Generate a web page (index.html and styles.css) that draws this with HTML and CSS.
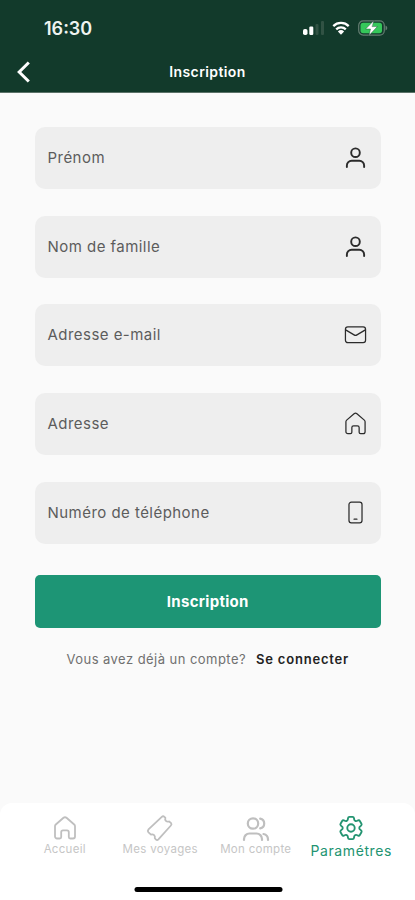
FILE: index.html
```html
<!DOCTYPE html>
<html lang="fr">
<head>
<meta charset="utf-8">
<meta name="viewport" content="width=device-width, initial-scale=1">
<title>Inscription</title>
<link rel="stylesheet" href="styles.css">
</head>
<body>
<svg class="symbols" aria-hidden="true">
  <symbol id="user" viewBox="0 0 24 24"><circle cx="12" cy="7" r="4.5"/><path d="M3 22v-1.600a5 5 0 0 1 5-5h8a5 5 0 0 1 5 5v1.600"/></symbol>
  <symbol id="mail" viewBox="0 0 24 24"><rect x="1.500" y="4" width="21" height="16.500" rx="2.500"/><path d="M1.700 7.200l8.800 5.200q1.500.9 3 0l8.800-5.200"/></symbol>
  <symbol id="home" viewBox="0 0 24 24"><path d="M2 10.200q0-1 .8-1.700l7.700-6.700q1.500-1.200 3 0l7.700 6.700q.8.700.8 1.700v10.300a2 2 0 0 1-2 2h-2.700a1.500 1.500 0 0 1-1.500-1.500v-4.800a1.800 1.800 0 0 0-1.800-1.800h-4a1.800 1.800 0 0 0-1.800 1.800v4.800a1.500 1.500 0 0 1-1.500 1.500H4a2 2 0 0 1-2-2z"/></symbol>
  <symbol id="phone" viewBox="0 0 24 24"><rect x="5.200" y="1.200" width="13.600" height="21.600" rx="2.500"/><path d="M10.500 19h3"/></symbol>
</svg>
<main class="screen">
  <header class="header">
    <div class="status">
      <span class="time">16:30</span>
      <div class="status-icons">
        <svg class="signal" viewBox="0 0 22 14"><rect class="on" x="0" y="8" width="4.500" height="6" rx="1.800"/><rect class="on" x="6.300" y="5.500" width="4" height="8.500" rx="1.200"/><rect class="off" x="12.500" y="3" width="3" height="11" rx="1"/><rect class="off" x="18" y="0" width="3" height="14" rx="1"/></svg>
        <svg class="wifi" viewBox="0 0 18 14"><path d="M1.300 5.100a11 11 0 0 1 15.400 0M4.200 8.300a6.900 6.900 0 0 1 9.600 0"/><path class="dot" d="M5.900 10.500a4.500 4.500 0 0 1 6.200 0L9 13.700z"/></svg>
        <svg class="battery" viewBox="0 0 30 16"><rect class="shell" x=".7" y=".9" width="25.600" height="14.200" rx="4.500"/><path class="cap" d="M27.500 5.500q1.800.8 1.800 2.500t-1.800 2.500z"/><rect class="charge" x="2.500" y="2.700" width="21.500" height="10.600" rx="2.700"/><path class="bolt" d="M15.700.8L7.600 9h4.900l-1.500 6.400 8.400-8.800h-5z"/></svg>
      </div>
    </div>
    <div class="titlebar">
      <svg class="back" viewBox="0 0 16 22"><path d="M12.800 1.500L3.200 11l9.600 9.500"/></svg>
      <h1 class="title">Inscription</h1>
    </div>
  </header>
  <form class="form">
    <div class="field"><span>Prénom</span><svg class="bold"><use href="#user"/></svg></div>
    <div class="field"><span>Nom de famille</span><svg class="bold"><use href="#user"/></svg></div>
    <div class="field"><span>Adresse e-mail</span><svg><use href="#mail"/></svg></div>
    <div class="field"><span>Adresse</span><svg><use href="#home"/></svg></div>
    <div class="field"><span>Numéro de téléphone</span><svg><use href="#phone"/></svg></div>
    <button class="submit" type="button">Inscription</button>
    <p class="login"><span class="question">Vous avez déjà un compte?</span><a class="link">Se connecter</a></p>
  </form>
  <nav class="tabs">
    <a class="tab"><svg viewBox="0 0 24 24"><use href="#home"/></svg><span>Accueil</span></a>
    <a class="tab"><svg class="ticket" viewBox="0 0 26 26"><path d="M1.500 14.300L14.800 1.800q1.300-1.200 2.600 0l1 1q-.7 1.900.5 3.100t3.200.6l1.800 1.400q1.200 1.300 0 2.600L11.400 24.300q-1.300 1.300-2.600 0l-1-1.100q.5-1.900-.7-3t-3.100-.6l-2.500-2.300q-1.300-1.500 0-3z"/></svg><span>Mes voyages</span></a>
    <a class="tab"><svg class="people" viewBox="0 0 28 26"><circle cx="11" cy="7.500" r="5.200"/><path d="M2 24v-1a5.500 5.500 0 0 1 5.500-5.500h7a5.500 5.500 0 0 1 5.500 5.500v1M18.200 2.600a5 5 0 0 1 0 9.800M21.500 18a5.600 5.600 0 0 1 4.500 5.500v.5"/></svg><span>Mon compte</span></a>
    <a class="tab active"><svg class="gear" viewBox="2.300 2.300 19.400 19.400"><path d="M9.594 3.940c.09-.542.56-.94 1.110-.94h2.593c.55 0 1.020.398 1.110.94l.213 1.281c.063.374.313.686.645.87.074.04.147.083.22.127.325.196.72.257 1.075.124l1.217-.456a1.125 1.125 0 0 1 1.370.49l1.296 2.247a1.125 1.125 0 0 1-.26 1.431l-1.003.827c-.293.241-.438.613-.43.992a7.723 7.723 0 0 1 0 .255c-.008.378.137.75.43.991l1.004.827c.424.35.534.955.26 1.430l-1.298 2.247a1.125 1.125 0 0 1-1.369.491l-1.217-.456c-.355-.133-.75-.072-1.076.124a6.470 6.470 0 0 1-.22.128c-.331.183-.581.495-.644.869l-.213 1.281c-.09.543-.56.94-1.110.94h-2.594c-.55 0-1.019-.398-1.110-.94l-.213-1.281c-.062-.374-.312-.686-.644-.87a6.520 6.520 0 0 1-.22-.127c-.325-.196-.72-.257-1.076-.124l-1.217.456a1.125 1.125 0 0 1-1.369-.49l-1.297-2.247a1.125 1.125 0 0 1 .26-1.431l1.004-.827c.292-.24.437-.613.43-.991a6.932 6.932 0 0 1 0-.255c.007-.38-.138-.751-.43-.992l-1.004-.827a1.125 1.125 0 0 1-.26-1.430l1.297-2.247a1.125 1.125 0 0 1 1.370-.491l1.216.456c.356.133.751.072 1.076-.124.072-.044.146-.086.22-.128.332-.183.582-.495.644-.869l.214-1.280Z"/><circle cx="12" cy="12" r="3"/></svg><span>Paramétres</span></a>
  </nav>
  <div class="indicator"></div>
</main>
</body>
</html>
```
FILE: styles.css
```css
* { box-sizing: border-box; }
body { margin: 0; font-family: Inter, "Liberation Sans", sans-serif; background: #fafafa; }
svg { display: block; fill: none; stroke: currentColor; stroke-width: 1.4; stroke-linecap: round; stroke-linejoin: round; overflow: visible; }
.symbols { display: none; }
.screen { display: flex; flex-direction: column; height: 900px; background: #fafafa; }

.header { height: 93px; background: #123a2b; border-bottom: 1px solid #5b7268; color: #fff; }
.status { display: flex; justify-content: space-between; align-items: center; height: 56px; padding: 0 27.500px 0 44px; }
.time { font-size: 18px; font-weight: 600; color: #eef3f0; }
.status-icons { display: flex; align-items: center; gap: 7.500px; }
.status-icons svg { stroke: none; }
.signal { width: 22px; height: 14px; }
.signal .on { fill: #fff; }
.signal .off { fill: #315244; }
.wifi { width: 18px; height: 14px; }
.status-icons .wifi path { stroke: #fff; stroke-width: 2.3; stroke-linecap: butt; }
.status-icons .wifi .dot { fill: #fff; stroke: none; }
.battery { width: 30px; height: 16px; }
.battery .shell { stroke: #647c71; stroke-width: 1.2; }
.battery .cap { fill: #647c71; }
.battery .charge { fill: #35c75a; }
.battery .bolt { fill: #fff; stroke: #123a2b; stroke-width: .4; }
.titlebar { display: grid; grid-template-columns: 1fr auto 1fr; align-items: center; height: 32px; padding: 0 16px; }
.back { width: 16px; height: 22px; stroke-width: 3; stroke-linecap: butt; stroke-linejoin: miter; }
.title { margin: -2px 0 0; font-size: 14px; font-weight: 600; letter-spacing: .4px; }

.form { display: flex; flex-direction: column; padding: 34px 34px 0 34.500px; }
.field { display: flex; align-items: center; justify-content: space-between; height: 62px; margin-bottom: 26.700px; padding: 0 14px 1px 13px; border-radius: 10px; background: #eee; color: #5c5c5c; font-size: 15px; letter-spacing: .46px; }
.field svg { width: 23px; height: 23px; color: #2b2b2b; stroke-width: 1.3; }
.field svg.bold { stroke-width: 2; }
.submit { height: 53px; margin-top: 5px; padding: 0 0 1px; border: 0; border-radius: 5px; background: #1d9575; color: #fff; font: 700 15px Inter, sans-serif; letter-spacing: .3px; }
.login { display: flex; justify-content: center; align-items: center; gap: 10px; margin: 20px 0 0; height: 22px; font-size: 13px; letter-spacing: .45px; color: #707070; white-space: nowrap; }
.link { color: #222; font-weight: 600; letter-spacing: .8px; }

.tabs { display: grid; grid-template-columns: repeat(4, 95.500px); height: 97px; margin-top: auto; padding: 13px 0 0 17px; background: #fff; color: #bfbfbf; border-radius: 12px 12px 0 0; }
.tab { display: flex; flex-direction: column; align-items: center; font-size: 11.500px; line-height: 14px; letter-spacing: .3px; white-space: nowrap; }
.tab span { color: #c6c6c6; }
.tab svg { width: 24px; height: 24px; stroke-width: 1.800; margin-bottom: 2px; }
.tab svg.ticket { width: 26px; height: 26px; margin: -1px 0 1px; }
.tab svg.people { width: 28px; height: 26px; margin-bottom: 0; stroke-width: 2.200; }
.tab svg.gear { stroke-width: 1.500; }
.tab.active, .tab.active span { color: #239471; font-size: 14px; line-height: 18px; letter-spacing: .6px; }
.indicator { width: 148px; height: 5px; margin: -13px auto 8px; border-radius: 3px; background: #000; transform: translateX(.5px); }
```
